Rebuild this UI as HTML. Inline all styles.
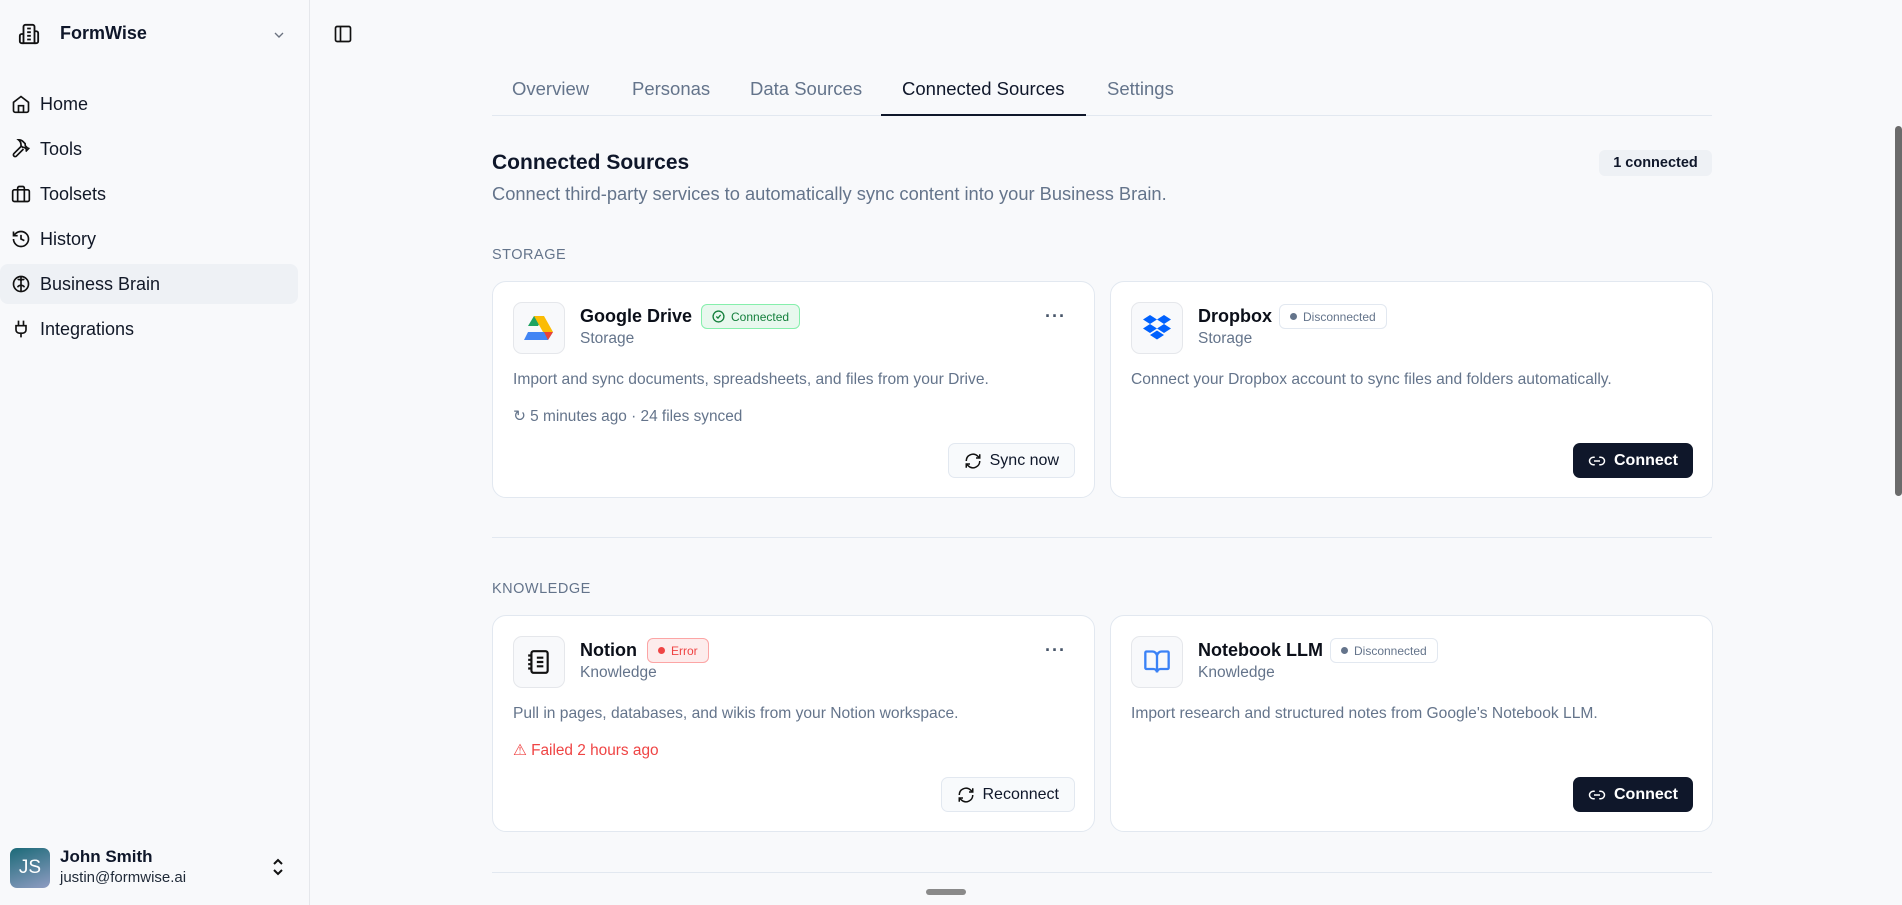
<!DOCTYPE html>
<html><head><meta charset="utf-8"><style>
*{box-sizing:border-box;margin:0;padding:0}
body{width:1902px;height:905px;overflow:hidden;background:#f8f9fb;font-family:"Liberation Sans",sans-serif;color:#0f172a;position:relative}
.a{position:absolute}
.side{left:0;top:0;width:310px;height:905px;border-right:1px solid #e5e7eb;background:#f8f9fb}
.nav{position:absolute;left:0;width:298px;height:40px;display:flex;align-items:center;font-size:18px;color:#111827;border-radius:8px}
.nav svg{position:absolute;left:11px}
.nav span{position:absolute;left:40px}
.tab{position:absolute;top:78px;font-size:18.5px;color:#64748b}
.card{position:absolute;background:#fff;border:1px solid #e2e8f0;border-radius:14px;width:603px;height:217px}
.ic{position:absolute;left:20px;top:20px;width:52px;height:52px;border:1px solid #e5e7eb;border-radius:9px;background:#f8f9fb;display:flex;align-items:center;justify-content:center}
.ttl{position:absolute;left:87px;top:24px;font-size:18px;font-weight:bold;color:#0b0f19}
.sub{position:absolute;left:87px;top:48px;font-size:15.5px;color:#64748b}
.badge{position:absolute;top:22px;height:25px;border-radius:6px;font-size:12px;display:flex;align-items:center;padding:0 10px;gap:6px}
.desc{position:absolute;left:20px;top:89px;font-size:15.6px;color:#64748b}
.meta{position:absolute;left:20px;top:125px;font-size:15.4px;color:#64748b}
.btn{position:absolute;right:19px;bottom:19px;height:35px;border-radius:7px;display:flex;align-items:center;gap:8px;padding:0 15px;font-size:16px;font-weight:bold}
.lt{background:#f8fafc;border:1px solid #e2e8f0;color:#0f172a;font-weight:normal}
.dk{background:#0f172a;color:#fff}
.dots{position:absolute;right:28px;top:24px;font-size:18px;color:#475569;letter-spacing:1px;font-weight:bold}
.sec{position:absolute;left:492px;font-size:14.5px;color:#64748b;letter-spacing:.5px}
.hr{position:absolute;left:492px;width:1220px;height:1px;background:#e2e8f0}
</style></head><body>
<div class="a side">
 <svg class="a" style="left:18px;top:23px" width="22" height="22" viewBox="0 0 24 24" fill="none" stroke="#111" stroke-width="2"><path d="M6 22V4a2 2 0 0 1 2-2h8a2 2 0 0 1 2 2v18z"/><path d="M6 12H4a2 2 0 0 0-2 2v6a2 2 0 0 0 2 2h2M18 9h2a2 2 0 0 1 2 2v9a2 2 0 0 1-2 2h-2M10 6h4M10 10h4M10 14h4M10 18h4"/></svg>
 <div class="a" style="left:60px;top:23px;font-size:18px;font-weight:bold">FormWise</div>
 <svg class="a" style="left:271px;top:27px" width="16" height="16" viewBox="0 0 24 24" fill="none" stroke="#6b7280" stroke-width="2"><path d="M6 9l6 6 6-6"/></svg>
 <div class="nav" style="top:84px"><svg width="20" height="20" viewBox="0 0 24 24" fill="none" stroke="#111" stroke-width="2"><path d="M3 10l9-7 9 7v10a2 2 0 0 1-2 2H5a2 2 0 0 1-2-2z"/><path d="M9 22v-8h6v8"/></svg><span>Home</span></div>
 <div class="nav" style="top:129px"><svg width="20" height="20" viewBox="0 0 24 24" fill="none" stroke="#111" stroke-width="2"><path d="M15 12l-8.5 8.5a2.1 2.1 0 0 1-3-3L12 9M17.6 15L22 10.6M20 11l-2.3-2.3a2.4 2.4 0 0 1-.7-1.7V5.6L14.4 3A7 7 0 0 0 9.6 1H9l.9.8A6.6 6.6 0 0 1 12 6.6V8l2 2h1.2a2.4 2.4 0 0 1 1.7.7L19 13"/></svg><span>Tools</span></div>
 <div class="nav" style="top:174px"><svg width="20" height="20" viewBox="0 0 24 24" fill="none" stroke="#111" stroke-width="2"><rect x="2" y="7" width="20" height="14" rx="2"/><path d="M16 21V5a2 2 0 0 0-2-2h-4a2 2 0 0 0-2 2v16"/></svg><span>Toolsets</span></div>
 <div class="nav" style="top:219px"><svg width="20" height="20" viewBox="0 0 24 24" fill="none" stroke="#111" stroke-width="2"><path d="M3 12a9 9 0 1 0 9-9 9.7 9.7 0 0 0-6.7 2.7L3 8"/><path d="M3 3v5h5M12 7v5l4 2"/></svg><span>History</span></div>
 <div class="nav" style="top:264px;background:#eef1f5"><svg width="20" height="20" viewBox="0 0 24 24" fill="none" stroke="#111" stroke-width="2"><circle cx="12" cy="12" r="9"/><path d="M12 3v18M12 8a3 3 0 0 0-4-1M12 8a3 3 0 0 1 4-1M12 14a3 3 0 0 0-4 2M12 14a3 3 0 0 1 4 2"/></svg><span>Business Brain</span></div>
 <div class="nav" style="top:309px"><svg width="20" height="20" viewBox="0 0 24 24" fill="none" stroke="#111" stroke-width="2"><path d="M12 22v-5M9 8V2M15 8V2M18 8v5a4 4 0 0 1-4 4h-4a4 4 0 0 1-4-4V8z"/></svg><span>Integrations</span></div>
 <div class="a" style="left:10px;top:848px;width:40px;height:40px;border-radius:7px;background:linear-gradient(160deg,#1c6a78,#8f9cc2);color:#fff;font-size:19px;display:flex;align-items:center;justify-content:center">JS</div>
 <div class="a" style="left:60px;top:847px;font-size:17px;font-weight:bold">John Smith</div>
 <div class="a" style="left:60px;top:869px;font-size:15px;color:#1f2937">justin@formwise.ai</div>
 <svg class="a" style="left:270px;top:857px" width="16" height="20" viewBox="0 0 16 20" fill="none" stroke="#111" stroke-width="2"><path d="M4 7l4-4 4 4M4 13l4 4 4-4"/></svg>
</div>
<svg class="a" style="left:333px;top:24px" width="20" height="20" viewBox="0 0 24 24" fill="none" stroke="#111" stroke-width="2"><rect x="3" y="3" width="18" height="18" rx="2"/><path d="M9 3v18"/></svg>
<div class="tab" style="left:512px">Overview</div>
<div class="tab" style="left:632px">Personas</div>
<div class="tab" style="left:750px">Data Sources</div>
<div class="tab" style="left:902px;color:#0f172a">Connected Sources</div>
<div class="tab" style="left:1107px">Settings</div>
<div class="hr" style="top:115px"></div>
<div class="a" style="left:881px;top:114px;width:205px;height:2px;background:#0f172a"></div>
<div class="a" style="left:492px;top:151px;font-size:21px;font-weight:bold">Connected Sources</div>
<div class="a" style="left:492px;top:183px;font-size:18.3px;color:#64748b">Connect third-party services to automatically sync content into your Business Brain.</div>
<div class="a" style="left:1599px;top:150px;width:113px;height:26px;border-radius:6px;background:#eef1f5;font-size:14.5px;font-weight:bold;display:flex;align-items:center;justify-content:center">1 connected</div>
<div class="sec" style="top:247px">STORAGE</div>
<div class="card" style="left:492px;top:281px">
 <div class="ic"><svg width="30" height="28" viewBox="0 0 30 28"><path d="M10 2h10l-6 10H4z" fill="#1ea362"/><path d="M10 2h10l9 16h-10z" fill="#fbbc04"/><path d="M4 18h25l-5 8H0z" fill="#4285f4"/><path d="M29 18l-5 8-4-8z" fill="#ea4335"/></svg></div>
 <div class="ttl">Google Drive</div><div class="sub">Storage</div>
 <div class="badge" style="left:208px;background:#e8f8ee;border:1px solid #86efac;color:#15803d"><svg width="13" height="13" viewBox="0 0 24 24" fill="none" stroke="#15803d" stroke-width="2.5"><circle cx="12" cy="12" r="10"/><path d="M8 12l3 3 5-6"/></svg>Connected</div>
 <div class="dots">···</div>
 <div class="desc">Import and sync documents, spreadsheets, and files from your Drive.</div>
 <div class="meta">↻ 5 minutes ago · 24 files synced</div>
 <div class="btn lt"><svg width="18" height="18" viewBox="0 0 24 24" fill="none" stroke="#111" stroke-width="2"><path d="M3 12a9 9 0 0 1 15-6.7L21 8M21 3v5h-5M21 12a9 9 0 0 1-15 6.7L3 16M8 16H3v5"/></svg>Sync now</div>
</div>
<div class="card" style="left:1110px;top:281px">
 <div class="ic"><svg width="30" height="28" viewBox="0 0 30 28" fill="#0061fe"><path d="M8 1l7 4.5-7 4.5-7-4.5zM22 1l7 4.5-7 4.5-7-4.5zM1 14.5L8 10l7 4.5L8 19zM29 14.5L22 10l-7 4.5 7 4.5zM8 21l7-4.5 7 4.5-7 4.5z"/></svg></div>
 <div class="ttl">Dropbox</div><div class="sub">Storage</div>
 <div class="badge" style="left:168px;background:#fff;border:1px solid #e2e8f0;color:#64748b"><span style="width:7px;height:7px;border-radius:50%;background:#64748b"></span>Disconnected</div>
 <div class="desc">Connect your Dropbox account to sync files and folders automatically.</div>
 <div class="btn dk"><svg width="18" height="18" viewBox="0 0 24 24" fill="none" stroke="#fff" stroke-width="2"><path d="M9 17H7A5 5 0 0 1 7 7h2M15 7h2a5 5 0 0 1 0 10h-2M8 12h8"/></svg>Connect</div>
</div>
<div class="hr" style="top:537px"></div>
<div class="sec" style="top:581px">KNOWLEDGE</div>
<div class="card" style="left:492px;top:615px">
 <div class="ic"><svg width="26" height="28" viewBox="0 0 24 24" fill="none" stroke="#111" stroke-width="2"><rect x="5" y="2" width="15" height="20" rx="2"/><path d="M2 6h4M2 10h4M2 14h4M2 18h4M10 8h6M10 12h6M10 16h6"/></svg></div>
 <div class="ttl">Notion</div><div class="sub">Knowledge</div>
 <div class="badge" style="left:154px;background:#fdecec;border:1px solid #fca5a5;color:#ef4444"><span style="width:7px;height:7px;border-radius:50%;background:#ef4444"></span>Error</div>
 <div class="dots">···</div>
 <div class="desc">Pull in pages, databases, and wikis from your Notion workspace.</div>
 <div class="meta" style="color:#ef4444">⚠ Failed 2 hours ago</div>
 <div class="btn lt"><svg width="18" height="18" viewBox="0 0 24 24" fill="none" stroke="#111" stroke-width="2"><path d="M3 12a9 9 0 0 1 15-6.7L21 8M21 3v5h-5M21 12a9 9 0 0 1-15 6.7L3 16M8 16H3v5"/></svg>Reconnect</div>
</div>
<div class="card" style="left:1110px;top:615px">
 <div class="ic"><svg width="28" height="28" viewBox="0 0 24 24" fill="none" stroke="#3b82f6" stroke-width="2"><path d="M12 7v14M3 18a1 1 0 0 1-1-1V4a1 1 0 0 1 1-1h5a4 4 0 0 1 4 4 4 4 0 0 1 4-4h5a1 1 0 0 1 1 1v13a1 1 0 0 1-1 1h-6a3 3 0 0 0-3 3 3 3 0 0 0-3-3z"/></svg></div>
 <div class="ttl">Notebook LLM</div><div class="sub">Knowledge</div>
 <div class="badge" style="left:219px;background:#fff;border:1px solid #e2e8f0;color:#64748b"><span style="width:7px;height:7px;border-radius:50%;background:#64748b"></span>Disconnected</div>
 <div class="desc">Import research and structured notes from Google's Notebook LLM.</div>
 <div class="btn dk"><svg width="18" height="18" viewBox="0 0 24 24" fill="none" stroke="#fff" stroke-width="2"><path d="M9 17H7A5 5 0 0 1 7 7h2M15 7h2a5 5 0 0 1 0 10h-2M8 12h8"/></svg>Connect</div>
</div>
<div class="hr" style="top:872px"></div>
<div class="a" style="left:926px;top:889px;width:40px;height:6px;border-radius:3px;background:#8a8a8a"></div>
<div class="a" style="left:1895px;top:126px;width:7px;height:370px;border-radius:4px;background:#6b6b6b"></div>
</body></html>
